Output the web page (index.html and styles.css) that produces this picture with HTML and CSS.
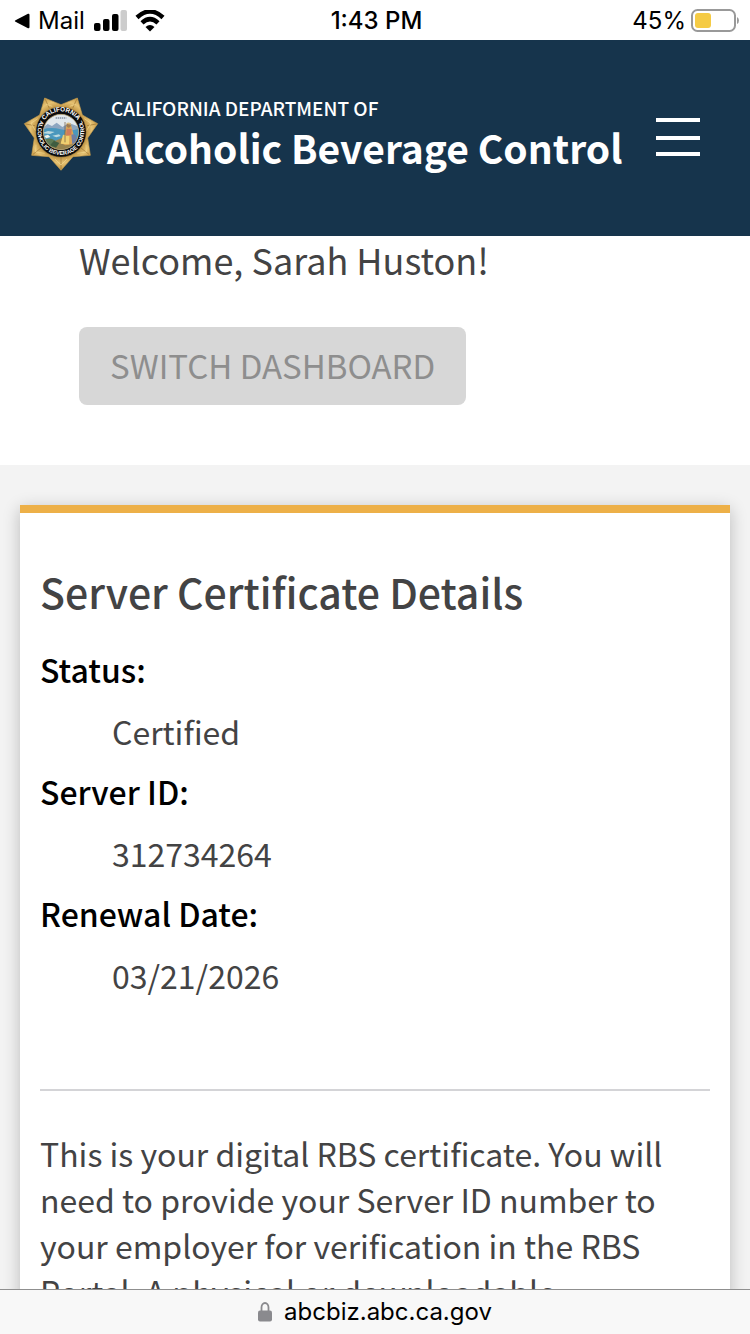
FILE: index.html
```
<!DOCTYPE html>
<html lang="en">
<head>
<meta charset="utf-8">
<meta name="viewport" content="width=device-width, initial-scale=1">
<title>Alcoholic Beverage Control</title>
<link rel="stylesheet" href="styles.css">
</head>
<body class="screen">
  <div class="status-bar">
    <div class="status-left">
      <svg class="back-icon" viewBox="0 0 16 16" aria-hidden="true"><path d="M1.5 7.2 14 .8Q15.5.3 15.500 2v12q0 1.700-1.500 1.200L1.500 8.800Q0 8 1.500 7.200Z"/></svg>
      <span>Mail</span>
      <svg class="signal-icon" viewBox="0 0 34 22" aria-hidden="true">
        <rect x="1" y="13" width="6.500" height="8" rx="2"/>
        <rect x="10" y="9" width="6.500" height="12" rx="2"/>
        <rect x="19" y="4" width="6.500" height="17" rx="2"/>
        <rect x="27.500" y="0" width="6.500" height="21" rx="2" fill="#ccc"/>
      </svg>
      <svg class="wifi-icon" viewBox="0 0 30 22" aria-hidden="true">
        <path d="M2 7.500Q15-4.500 28 7.500" fill="none" stroke="#000" stroke-width="4.500"/>
        <path d="M7 12.800Q15 5.500 23 12.800" fill="none" stroke="#000" stroke-width="4.500"/>
        <path d="M10.500 17Q15 13 19.500 17L15 21.500Z"/>
      </svg>
    </div>
    <span class="status-time">1:43 PM</span>
    <div class="status-right">
      <span>45%</span>
      <svg class="battery-icon" viewBox="0 0 48 24" aria-hidden="true">
        <rect x="1" y="1" width="43" height="21" rx="5.500" fill="none" stroke="#999" stroke-width="2"/>
        <rect x="4" y="4" width="16" height="15" rx="3" fill="#f5cb45"/>
        <path d="M46 8q2 1 2 3.500T46 15Z" fill="#999"/>
      </svg>
    </div>
  </div>

  <header class="site-header">
    <a class="brand" href="#">
      <svg class="badge" viewBox="38 38 228 222" aria-hidden="true">
        <defs>
          <radialGradient id="gold" cx="152" cy="143" r="113" gradientUnits="userSpaceOnUse">
            <stop offset=".65" stop-color="#bd9140"/>
            <stop offset=".82" stop-color="#e6c273"/>
            <stop offset="1" stop-color="#c79a48"/>
          </radialGradient>
          <clipPath id="scene"><circle cx="152" cy="143" r="53"/></clipPath>
          <path id="arc-top" d="M95 125A59 59 0 0 1 209 125"/>
          <path id="arc-bottom" d="M92 106A70 70 0 1 0 212 106"/>
        </defs>
        <path d="M152 258 116 217 64 213 72 161 42 118 88 92 103 41 152 61 201 41 216 92 262 118 232 161 240 213 188 217Z" fill="url(#gold)" stroke="#c99d4a" stroke-width="2"/>
        <g fill="none" stroke="#9b7330" stroke-width="2">
          <path d="M152 254V218M68 210 92 191M46 119 74 124M105 45 117 72M199 45 187 72M258 119 230 124M236 210 212 191"/>
          <path d="M108 60 126 66M196 60 178 66M222 103 242 117 228 140M82 103 62 117 76 140M77 181 76 203 103 207M227 181 228 203 201 207M134 224 152 242 170 224" stroke="#f2d88f"/>
        </g>
        <circle cx="152" cy="143" r="76" fill="#0b0b0c" stroke="#c9a04f" stroke-width="2"/>
        <g clip-path="url(#scene)">
          <path d="M95 88h114v112H95Z" fill="#e1e8ec"/>
          <path d="M95 132 112 119 125 125 139 115 156 128 176 116 209 128V148H95Z" fill="#8da6c0"/>
          <path d="M95 136Q120 127 151 135T209 132V178H95Z" fill="#4a97bd"/>
          <path d="M95 146 113 140 133 143 119 149ZM126 154 146 150 151 155 138 159Z" fill="#bcd9df"/>
          <path d="M95 171Q116 155 133 168L147 180V200H95Z" fill="#5c7a55"/>
          <path d="M132 171 156 160 209 162V200H127Z" fill="#96834f"/>
          <path d="M101 155 113 151 120 158 108 162Z" fill="#f1f3eb"/>
          <path d="M168 126Q174 116 182 122L185 133 190 151 193 178 165 183 151 176 162 154Z" fill="#dca554"/>
          <path d="M158 151 177 155 176 180 151 178Z" fill="#efd071"/>
          <path d="M169 133 184 134 183 152 167 154Z" fill="#cf7c5c"/>
          <circle cx="175" cy="123" r="7" fill="#a17c4f"/>
          <path d="M167 118Q177 109 184 121Z" fill="#d7bb80"/>
          <path d="M164 113V174" stroke="#6a5539" stroke-width="2"/>
          <path d="M183 151Q202 145 198 173L186 180Z" fill="#6f7ea5"/>
          <path d="M136 101h32" stroke="#55637b" stroke-width="3" stroke-dasharray="4 2"/>
          <path d="M119 183 131 169 147 176 137 190Z" fill="#3f5d40"/>
        </g>
        <circle cx="152" cy="143" r="53" fill="none" stroke="#bfa66d" stroke-width="2"/>
        <g class="badge-text">
          <text class="badge-state"><textPath href="#arc-top" startOffset="50%" text-anchor="middle">CALIFORNIA</textPath></text>
          <text><textPath href="#arc-bottom" startOffset="50%" text-anchor="middle">ALCOHOLIC BEVERAGE CONTROL</textPath></text>
        </g>
      </svg>
      <span class="brand-text">
        <span class="brand-dept">CALIFORNIA DEPARTMENT OF</span>
        <span class="brand-name">Alcoholic Beverage Control</span>
      </span>
    </a>
    <button class="menu-button" type="button" aria-label="Menu">
      <svg class="menu-icon" viewBox="0 0 44 38" aria-hidden="true"><path d="M0 0h44v4H0zM0 18h44v4H0zM0 34h44v4H0z"/></svg>
    </button>
  </header>

  <main class="page">
    <section class="welcome">
      <p class="welcome-text">Welcome, Sarah Huston!</p>
      <button class="switch-button" type="button" disabled>SWITCH DASHBOARD</button>
    </section>
    <section class="dashboard">
      <article class="card">
        <h2 class="card-title">Server Certificate Details</h2>
        <dl class="details">
          <dt>Status:</dt>
          <dd>Certified</dd>
          <dt>Server ID:</dt>
          <dd>312734264</dd>
          <dt>Renewal Date:</dt>
          <dd>03/21/2026</dd>
        </dl>
        <hr class="divider">
        <p class="card-note">This is your digital RBS certificate. You will need to provide your Server ID number to your employer for verification in the RBS Portal. A physical or downloadable</p>
      </article>
    </section>
  </main>

  <footer class="address-bar">
    <svg class="lock-icon" viewBox="0 0 14 20" aria-hidden="true">
      <path d="M3.500 10V5.500a3.500 4.500 0 0 1 7 0V10" fill="none" stroke="#8a8a8e" stroke-width="1.800"/>
      <rect y="8.500" width="14" height="11" rx="2" fill="#8a8a8e"/>
    </svg>
    <span>abcbiz.abc.ca.gov</span>
  </footer>
</body>
</html>
```
FILE: styles.css
```
* {
  box-sizing: border-box;
}

.screen {
  margin: 0;
  height: 100vh;
  display: flex;
  flex-direction: column;
  overflow: hidden;
  background: #fff;
  color: #434344;
  font-family: "Noto Sans CJK SC", "Noto Sans", sans-serif;
  font-size: 32px;
  line-height: 46px;
}

.status-bar {
  flex: none;
  display: grid;
  grid-template-columns: 1fr auto 1fr;
  align-items: center;
  height: 40px;
  padding: 0 11px 0 14px;
  color: #000;
  font-family: Inter, sans-serif;
  font-size: 24px;
  line-height: 42px;
}

.status-left,
.status-right {
  display: flex;
  align-items: center;
}

.status-left {
  gap: 8px;
}

.status-right {
  justify-content: flex-end;
  gap: 5px;
}

.status-time {
  font-weight: 500;
}

.back-icon {
  width: 16px;
  height: 16px;
}

.signal-icon {
  width: 34px;
  height: 22px;
}

.wifi-icon {
  width: 30px;
  height: 22px;
}

.battery-icon {
  width: 48px;
  height: 24px;
}

.site-header {
  flex: none;
  display: flex;
  align-items: center;
  justify-content: space-between;
  height: 196px;
  padding: 0 50px 2px 23px;
  background: #16344c;
}

.brand {
  display: flex;
  align-items: center;
  gap: 8px;
  padding-bottom: 6px;
  color: #fff;
  text-decoration: none;
}

.badge {
  width: 76px;
  height: 74px;
}

.badge-text {
  fill: #fff;
  font-family: "Liberation Sans", sans-serif;
  font-size: 17px;
  font-weight: 700;
}

.badge-state {
  font-size: 19px;
}

.brand-text {
  display: flex;
  flex-direction: column;
}

.brand-dept {
  padding-left: 4px;
  font-size: 19px;
  font-weight: 500;
  line-height: 26px;
}

.brand-name {
  font-size: 39px;
  font-weight: 700;
  line-height: 52px;
}

.menu-button {
  display: flex;
  padding: 0;
  border: 0;
  background: none;
}

.menu-icon {
  width: 44px;
  height: 38px;
  fill: #fff;
}

.page {
  flex: 1;
  min-height: 0;
  overflow: hidden;
}

.welcome {
  padding: 0 79px 60px;
}

.welcome-text {
  margin: 0 0 45px;
  font-size: 36px;
  line-height: 46px;
}

.switch-button {
  display: block;
  padding: 15px 31px 17px;
  border: 0;
  border-radius: 8px;
  background: #d7d7d7;
  color: #8e8e8e;
  font: inherit;
  font-size: 33px;
}

.dashboard {
  padding: 40px 20px;
  background: #f3f3f3;
}

.card {
  padding: 49px 20px 40px;
  border-top: 8px solid #edb048;
  background: #fff;
  box-shadow: 0 4px 16px rgba(0, 0, 0, .24);
}

.card-title {
  margin: 0 0 26px;
  font-size: 41px;
  font-weight: 500;
  line-height: 58px;
}

.details {
  margin: 0;
}

.details dt {
  margin-bottom: 16px;
  color: #000;
  font-weight: 500;
}

.details dd {
  margin: 0 0 14px 72px;
}

.details dd:last-child {
  margin-bottom: 0;
}

.divider {
  height: 2px;
  margin: 91px 0 39px;
  border: 0;
  background: #d4d4d7;
}

.card-note {
  margin: 0;
}

.address-bar {
  flex: none;
  display: flex;
  align-items: center;
  justify-content: center;
  gap: 12px;
  height: 45px;
  border-top: 1px solid #8f8f8f;
  background: #f8f8f8;
  color: #000;
  font-family: Inter, sans-serif;
  font-size: 24px;
  line-height: 44px;
}

.lock-icon {
  width: 14px;
  height: 20px;
}
```
